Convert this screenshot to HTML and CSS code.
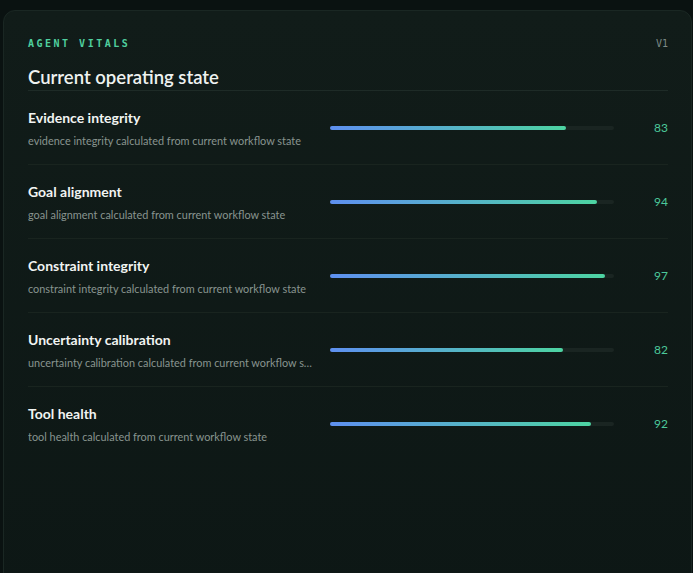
FILE: index.html
```html
<!DOCTYPE html>
<html lang="en">
<head>
    <meta charset="UTF-8">
    <meta name="viewport" content="width=device-width, initial-scale=1.0">
    <title>Agent Vitals</title>
    <link rel="stylesheet" href="styles.css">
</head>
<body>
    <!-- Vitals card -->
    <section class="card">
        <header class="card-head">
            <div class="eyebrow-row">
                <span class="eyebrow">AGENT VITALS</span>
                <span class="version">V1</span>
            </div>
            <h1>Current operating state</h1>
        </header>

        <div class="vital">
            <div class="vital-text">
                <h2>Evidence integrity</h2>
                <p>evidence integrity calculated from current workflow state</p>
            </div>
            <div class="track"><div class="fill" style="width: 83%;"></div></div>
            <span class="value">83</span>
        </div>

        <div class="vital">
            <div class="vital-text">
                <h2>Goal alignment</h2>
                <p>goal alignment calculated from current workflow state</p>
            </div>
            <div class="track"><div class="fill" style="width: 94%;"></div></div>
            <span class="value">94</span>
        </div>

        <div class="vital">
            <div class="vital-text">
                <h2>Constraint integrity</h2>
                <p>constraint integrity calculated from current workflow state</p>
            </div>
            <div class="track"><div class="fill" style="width: 97%;"></div></div>
            <span class="value">97</span>
        </div>

        <div class="vital">
            <div class="vital-text">
                <h2>Uncertainty calibration</h2>
                <p>uncertainty calibration calculated from current workflow state</p>
            </div>
            <div class="track"><div class="fill" style="width: 82%;"></div></div>
            <span class="value">82</span>
        </div>

        <div class="vital">
            <div class="vital-text">
                <h2>Tool health</h2>
                <p>tool health calculated from current workflow state</p>
            </div>
            <div class="track"><div class="fill" style="width: 92%;"></div></div>
            <span class="value">92</span>
        </div>
    </section>
</body>
</html>
```

FILE: styles.css
```css
/* Global */
body {
    margin: 0;
    padding: 10px 0 0 3px;
    background: #0a1211;
    font-family: 'Lato', 'Noto Sans', sans-serif;
    color: #e6ece9;
    overflow: hidden;
}

/* Card */
.card {
    width: 689px;
    box-sizing: border-box;
    min-height: 600px;
    padding: 26px 23px 0 24px;
    background: linear-gradient(180deg, #111c19, #0d1715);
    border: 1px solid #1a2723;
    border-radius: 12px;
}

.card-head {
    padding-bottom: 1px;
    border-bottom: 1px solid #1e2b27;
}

.eyebrow-row {
    display: flex;
    justify-content: space-between;
    align-items: center;
    height: 12px;
}

.eyebrow {
    font-family: 'DejaVu Sans Mono', monospace;
    font-size: 10px;
    font-weight: bold;
    letter-spacing: 2.5px;
    color: #4fcf9e;
}

.version {
    font-family: 'DejaVu Sans Mono', monospace;
    font-size: 10px;
    color: #7d8a86;
}

h1 {
    margin: 16px 0 0;
    font-size: 18.5px;
    font-weight: 600;
    line-height: 24px;
    color: #eef2f0;
}

/* Rows */
.vital {
    display: grid;
    grid-template-columns: 1fr 284px 38px;
    column-gap: 16px;
    align-items: center;
    height: 73px;
    border-bottom: 1px solid #19241f;
}

.vital:last-child {
    border-bottom: none;
}

.vital-text {
    min-width: 0;
    margin-top: 2px;
}

h2 {
    margin: 0;
    font-size: 14px;
    font-weight: bold;
    line-height: 18px;
    color: #f1f4f2;
}

.vital-text p {
    margin: 6px 0 0;
    font-size: 10.9px;
    line-height: 15px;
    color: #88948f;
    white-space: nowrap;
    overflow: hidden;
    text-overflow: ellipsis;
}

.track {
    height: 4px;
    border-radius: 2px;
    background: #1a2522;
}

.fill {
    height: 100%;
    border-radius: 2px;
    background: linear-gradient(90deg, #5e90f0, #4dd4a2);
}

.value {
    justify-self: end;
    font-size: 12px;
    color: #4cc99a;
}
```
